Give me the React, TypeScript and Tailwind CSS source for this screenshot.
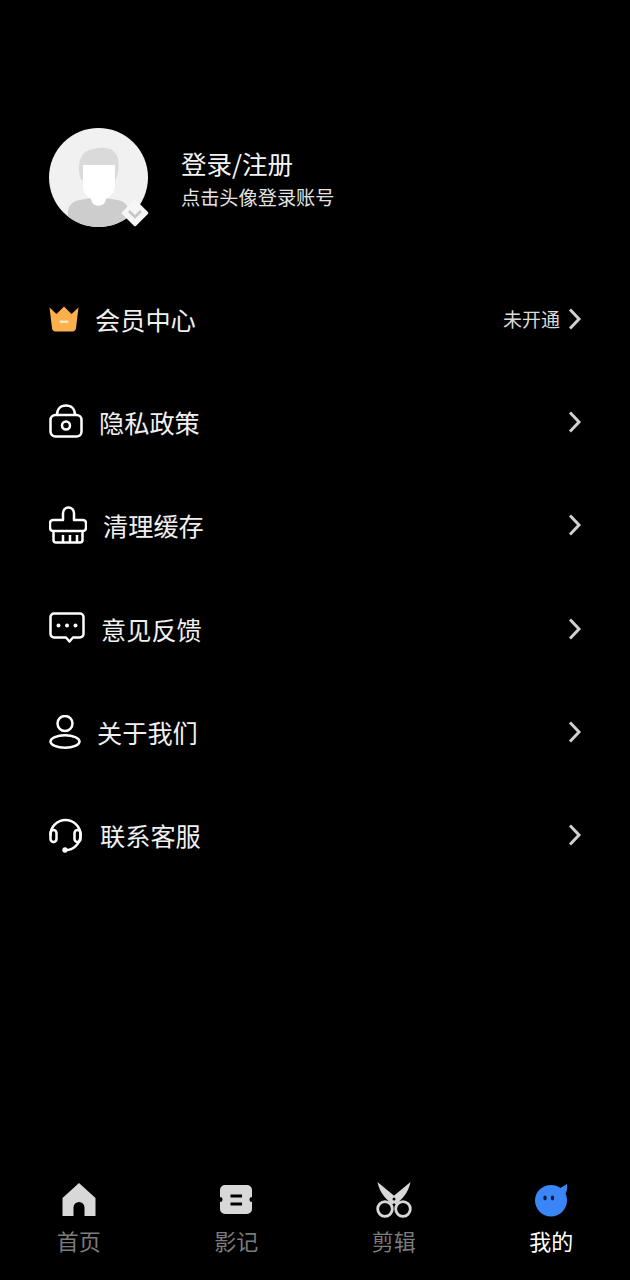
import React from 'react';

const FONT = "font-['Noto_Sans_CJK_SC','Noto_Sans',sans-serif]";

const Avatar = () => (
  <div className="relative w-[99px] h-[99px] shrink-0">
    <svg viewBox="0 0 99 99" className="w-full h-full">
      <defs>
        <clipPath id="avatar-clip">
          <circle cx="49.5" cy="49.5" r="49.5" />
        </clipPath>
      </defs>
      <circle cx="49.5" cy="49.5" r="49.5" fill="#f1f1f1" />
      <g clipPath="url(#avatar-clip)">
        <path d="M19 99V85c0-8 5-12 12-13l11-2h15l11 2c7 1 12 5 12 13v14z" fill="#cdcdcd" />
        <path d="M32 52c-3-9-3-18 1-24 3-5 8-7 16-8 9-1 15 1 18 6 4 6 3 17 0 26z" fill="#dadada" />
        <path d="M34 37h32v21c0 6-5 11-9 13l-1 3c-2 5-11 5-13 0l-1-3c-4-2-8-7-8-13z" fill="#fff" />
      </g>
    </svg>
    <div className="absolute left-[72px] top-[71px] w-[28px] h-[28px]">
      <svg viewBox="0 0 28 28" className="w-full h-full">
        <path d="M14 2 26 14 14 26 2 14z" fill="#f6f6f6" stroke="#f6f6f6" strokeWidth="2.500" strokeLinejoin="round" />
        <path d="M8 12l6 6 6-6" fill="none" stroke="#c6c6c6" strokeWidth="2.500" />
      </svg>
    </div>
  </div>
);

const Crown = () => (
  <svg viewBox="0 0 30 26" className="w-[30px] h-[26px]">
    <path
      d="M0.5 1.500 7.500 8 15 0.500 22.500 8 29.500 1.500 27 22c-.2 2-1.500 3.500-3.500 3.500h-17C4.500 25.500 3.200 24 3 22z"
      fill="#fbb04c"
    />
    <rect x="10.500" y="14.500" width="9" height="2.500" rx="1" fill="#ffe9c4" />
  </svg>
);

const Lock = () => (
  <svg viewBox="0 0 34 34" fill="none" stroke="#fff" strokeWidth="2.500" className="w-[34px] h-[34px]">
    <rect x="1.500" y="11" width="31" height="21.500" rx="5" />
    <path d="M8 11C8 5 11.500 1.500 17 1.500S26 5 26 11" />
    <circle cx="17" cy="21.500" r="4" />
  </svg>
);

const Basket = () => (
  <svg viewBox="0 0 38 38" fill="none" stroke="#fff" strokeWidth="2.500" strokeLinejoin="round" className="w-[38px] h-[38px]">
    <path d="M14 14V7a5.500 5.500 0 0 1 11 0v7h9a3 3 0 0 1 3 3v5a3 3 0 0 1-3 3H4a3 3 0 0 1-3-3v-5a3 3 0 0 1 3-3z" />
    <path d="M4.500 25v9a2.500 2.500 0 0 0 2.500 2.500h24a2.500 2.500 0 0 0 2.500-2.500v-9" />
    <path d="M14 29v7.500M21 29v7.500M28 29v7.500" />
  </svg>
);

const Chat = () => (
  <svg viewBox="0 0 36 31" fill="none" stroke="#fff" strokeWidth="2.500" strokeLinejoin="round" className="w-[36px] h-[31px]">
    <path d="M5 1.500h26a3.500 3.500 0 0 1 3.500 3.500v17a3.500 3.500 0 0 1-3.500 3.500h-7L20.500 29.500 17 25.500H5A3.500 3.500 0 0 1 1.500 22V5A3.500 3.500 0 0 1 5 1.500z" />
    <circle cx="9.500" cy="13.500" r="2" fill="#fff" stroke="none" />
    <circle cx="18" cy="13.500" r="2" fill="#fff" stroke="none" />
    <circle cx="26.500" cy="13.500" r="2" fill="#fff" stroke="none" />
  </svg>
);

const Person = () => (
  <svg viewBox="0 0 32 34" fill="none" stroke="#fff" strokeWidth="2.500" className="w-[32px] h-[34px]">
    <circle cx="16" cy="8.500" r="7.500" />
    <ellipse cx="16" cy="26.500" rx="14.500" ry="6.200" />
  </svg>
);

const Headset = () => (
  <svg viewBox="0 0 34 35" fill="none" stroke="#fff" strokeWidth="2.500" strokeLinecap="round" className="w-[34px] h-[35px]">
    <path d="M1.500 17A15 15 0 0 1 31.500 17A15 15 0 0 1 16 32" />
    <rect x="1.500" y="12" width="6" height="12" rx="3" />
    <rect x="25.500" y="12" width="6" height="12" rx="3" />
    <circle cx="16" cy="32" r="2.700" fill="#fff" stroke="none" />
  </svg>
);

const Chevron = () => (
  <svg viewBox="0 0 14 22" fill="none" stroke="#d0d0d0" strokeWidth="3" className="w-[14px] h-[22px]">
    <path d="M2 1.500 11 11 2 20.500" />
  </svg>
);

const HomeIcon = () => (
  <svg viewBox="0 0 34 33" className="w-[34px] h-[33px]">
    <path d="M17 0 33.500 15V33H22.500V24.500a5.500 5.500 0 0 0-11 0V33H.5V15z" fill="#d8d8d8" />
  </svg>
);

const TicketIcon = () => (
  <svg viewBox="0 0 32 29" className="w-[32px] h-[29px]">
    <path
      d="M5 0h22a5 5 0 0 1 5 5v7a2.500 2.500 0 0 0 0 5v7a5 5 0 0 1-5 5H5a5 5 0 0 1-5-5v-7a2.500 2.500 0 0 0 0-5V5a5 5 0 0 1 5-5z"
      fill="#d8d8d8"
    />
    <rect x="10.500" y="9.500" width="11.500" height="3" fill="#000" />
    <rect x="10.500" y="17.500" width="11.500" height="3" fill="#000" />
  </svg>
);

const ScissorsIcon = () => (
  <svg viewBox="0 0 36 36" className="w-[36px] h-[36px]">
    <path d="M1.500 0 22 17 16.500 22.500C10 17.500 3.500 10.500 1.500 0z" fill="#d8d8d8" />
    <path d="M34.500 0 14 17 19.500 22.500C26 17.500 32.500 10.500 34.500 0z" fill="#d8d8d8" />
    <circle cx="9" cy="27" r="7.300" fill="none" stroke="#d8d8d8" strokeWidth="2.800" />
    <circle cx="27" cy="27" r="7.300" fill="none" stroke="#d8d8d8" strokeWidth="2.800" />
    <circle cx="18" cy="17" r="1.500" fill="#000" />
  </svg>
);

const MineIcon = () => (
  <svg viewBox="0 0 34 34" className="w-[34px] h-[34px]">
    <path d="M17 2c4 0 7 1 9.500 3L33 1c.5 4 0 7-1.500 9.500 1 2 1.500 4.200 1.500 7C33 26 26 33.500 17 33.500S1 26 1 17.500 8 2 17 2z" fill="#3a86f8" />
    <ellipse cx="11" cy="15" rx="1.700" ry="2.400" fill="#0b1b3a" />
    <ellipse cx="18.500" cy="15" rx="1.700" ry="2.400" fill="#0b1b3a" />
  </svg>
);

const rows = [
  { label: '会员中心', icon: <Crown />, box: 'w-[46px]', status: '未开通' },
  { label: '隐私政策', icon: <Lock />, box: 'w-[50px] pb-[2px]' },
  { label: '清理缓存', icon: <Basket />, box: 'w-[54px]' },
  { label: '意见反馈', icon: <Chat />, box: 'w-[52px] pb-[2px]' },
  { label: '关于我们', icon: <Person />, box: 'w-[48px]' },
  { label: '联系客服', icon: <Headset />, box: 'w-[51px]' },
];

const tabs = [
  { label: '首页', icon: <HomeIcon /> },
  { label: '影记', icon: <TicketIcon /> },
  { label: '剪辑', icon: <ScissorsIcon /> },
  { label: '我的', icon: <MineIcon />, active: true },
];

export default function App() {
  return (
    <div className={`${FONT} h-[1280px] bg-black text-white flex flex-col overflow-hidden`}>
      {/* Profile */}
      <div className="pt-[128px] pl-[49px] flex items-center gap-[33px]">
        <Avatar />
        <div className="flex flex-col gap-[2px]">
          <span className="text-[25.5px] leading-[36px] text-[#f4f4f4]">登录/注册</span>
          <span className="text-[19.2px] leading-[28px] text-[#e4e4e4]">点击头像登录账号</span>
        </div>
      </div>

      {/* Menu */}
      <div className="mt-[40.5px] pl-[49px] pr-[48px] flex flex-col">
        {rows.map((r) => (
          <div key={r.label} className="h-[103.200px] flex items-center">
            <div className={`${r.box} shrink-0 flex items-center`}>{r.icon}</div>
            <span className="text-[25.2px] leading-[36px] text-[#f0f0f0]">{r.label}</span>
            <div className="ml-auto flex items-center gap-[8px]">
              {r.status && <span className="text-[19px] leading-[28px] text-[#dcdcdc]">{r.status}</span>}
              <Chevron />
            </div>
          </div>
        ))}
      </div>

      {/* Tab bar */}
      <div className="mt-auto pb-[24px] grid grid-cols-4">
        {tabs.map((t) => (
          <div key={t.label} className="flex flex-col items-center">
            <div className="h-[38px] flex items-center justify-center">{t.icon}</div>
            <span className={`mt-[5.5px] text-[22px] leading-[32px] ${t.active ? 'text-white' : 'text-[#7c7c7c]'}`}>
              {t.label}
            </span>
          </div>
        ))}
      </div>
    </div>
  );
}
